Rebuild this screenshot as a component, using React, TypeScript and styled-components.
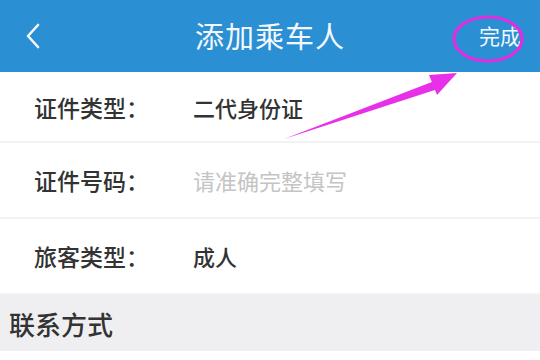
import React from "react";
import styled, { createGlobalStyle } from "styled-components";

const Global = createGlobalStyle`
  html, body { margin: 0; padding: 0; background: #ffffff; }
  body { font-family: "Noto Sans CJK SC", "Noto Sans", sans-serif; }
  * { box-sizing: border-box; }
`;

const Page = styled.div`
  position: relative;
  width: 540px;
  height: 360px;
  overflow: hidden;
  background: #ffffff;
  display: flex;
  flex-direction: column;
`;

const Header = styled.header`
  height: 72px;
  flex-shrink: 0;
  background: #2b8fd3;
  display: grid;
  grid-template-columns: 80px 1fr 80px;
  align-items: center;
  color: #f4f8fc;
`;

const Back = styled.div`
  padding-left: 25px;
  display: flex;
  align-items: center;
`;

const Title = styled.div`
  text-align: center;
  font-size: 29px;
  line-height: 1;
  letter-spacing: 1px;
  padding-bottom: 2px;
`;

const Done = styled.div`
  font-size: 21px;
  line-height: 1;
  text-align: right;
  padding-right: 19px;
  padding-bottom: 2px;
`;

const Row = styled.div<{ $h: number }>`
  height: ${(p) => p.$h}px;
  flex-shrink: 0;
  display: flex;
  align-items: center;
  padding-left: 34px;
  border-bottom: 2px solid #f3f3f3;
  font-size: 23px;
  font-weight: 500;
`;

const Label = styled.span`
  width: 159px;
  color: #333333;
`;

const Value = styled.span<{ $placeholder?: boolean }>`
  font-size: 22px;
  color: ${(p) => (p.$placeholder ? "#c4c4c4" : "#333333")};
  font-weight: ${(p) => (p.$placeholder ? 400 : 500)};
`;

const Section = styled.div`
  height: 56px;
  flex-shrink: 0;
  background: #efeff2;
  display: flex;
  align-items: center;
  padding-left: 9px;
  font-size: 26px;
  font-weight: 500;
  color: #333333;
`;

const Overlay = styled.svg`
  position: absolute;
  left: 0;
  top: 0;
  pointer-events: none;
`;

export default function App() {
  return (
    <>
      <Global />
      <Page>
        <Header>
          <Back>
            <svg width="16" height="26" viewBox="0 0 16 26">
              <path d="M13 2 L3 13 L13 24" fill="none" stroke="#f4f8fc" strokeWidth="2.6" strokeLinecap="round" strokeLinejoin="round" />
            </svg>
          </Back>
          <Title>添加乘车人</Title>
          <Done>完成</Done>
        </Header>
        <Row $h={71}>
          <Label>证件类型：</Label>
          <Value>二代身份证</Value>
        </Row>
        <Row $h={76}>
          <Label>证件号码：</Label>
          <Value $placeholder>请准确完整填写</Value>
        </Row>
        <Row $h={76}>
          <Label>旅客类型：</Label>
          <Value>成人</Value>
        </Row>
        <Section>联系方式</Section>
        <Overlay width="540" height="360" viewBox="0 0 540 360">
          <ellipse cx="488" cy="39" rx="34" ry="22" fill="none" stroke="#e02de0" strokeWidth="3.2" />
          <polygon points="284,139 437,80 441,88" fill="#e830e8" />
          <polygon points="457,73 429,75 437,95" fill="#e830e8" />
        </Overlay>
      </Page>
    </>
  );
}
